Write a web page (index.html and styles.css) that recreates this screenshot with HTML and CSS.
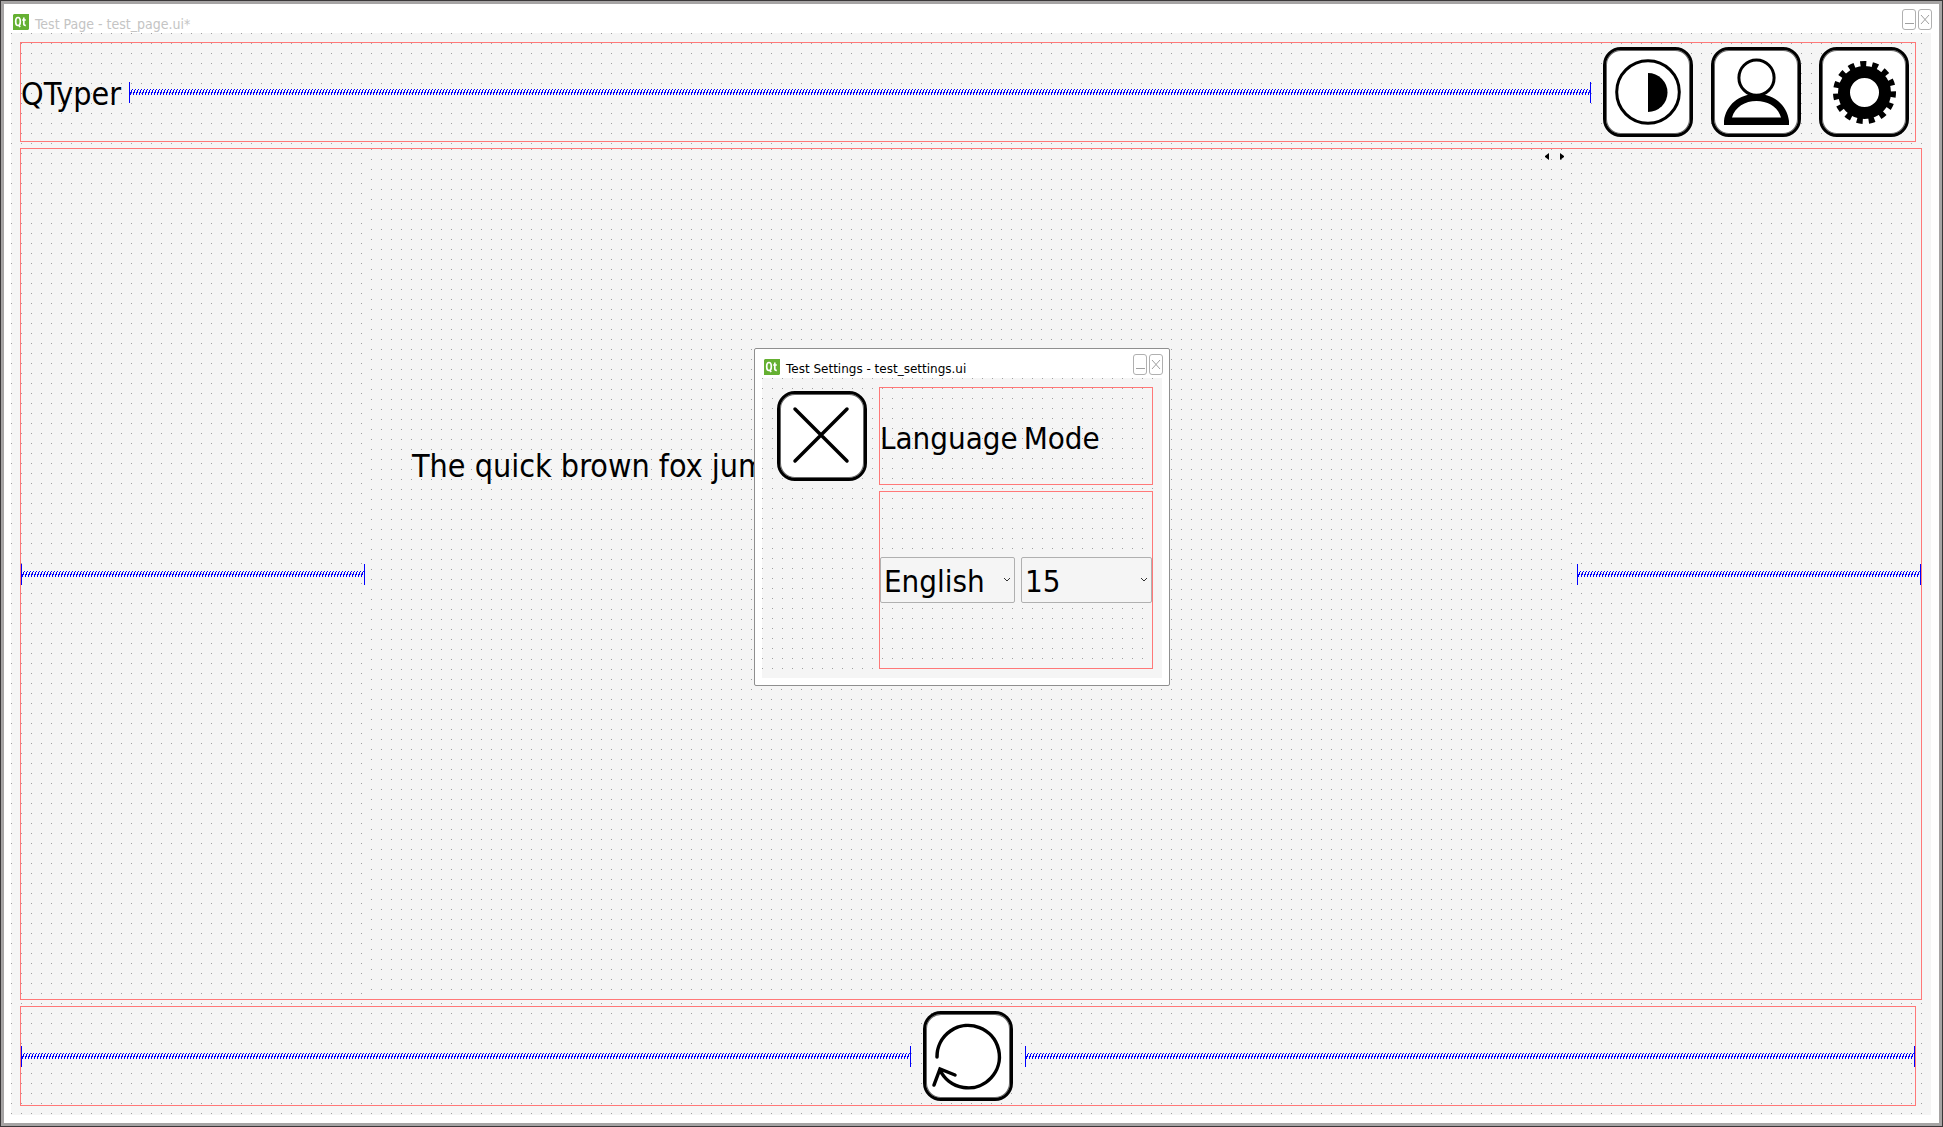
FILE: index.html
```html
<!DOCTYPE html>
<html lang="en">
<head>
<meta charset="utf-8">
<title>Test Page</title>
<link rel="stylesheet" href="styles.css">
</head>
<body>
<svg class="defs" width="0" height="0" aria-hidden="true">
  <defs>
    <pattern id="coil" width="3" height="6" patternUnits="userSpaceOnUse">
      <path d="M2 0h1v1h-1zM1 1h1v3h-1zM0 3h1v3h-1z" fill="#00f" shape-rendering="crispEdges"/>
    </pattern>
    <symbol id="qt" viewBox="0 0 16 16">
      <path d="M1 0h15v15l-1 1H0V1z" fill="#65b032"/>
      <path d="M5 3.500c-1.800 0-2.300 1.500-2.300 4s.500 4 2.300 4 2.300-1.500 2.300-4-.500-4-2.300-4zM5.500 11l1.700 2M10.800 3.500v6.500q0 1.500 2 1.300M9.200 6h3.600" fill="none" stroke="#fff" stroke-width="1.700"/>
    </symbol>
  </defs>
</svg>
<main class="window page-window">
  <header class="titlebar muted">
    <svg class="logo" aria-hidden="true"><use href="#qt"/></svg>
    <h1 class="title">Test Page - test_page.ui*</h1>
    <button class="winbtn" aria-label="Minimize"><svg viewBox="0 0 12 19"><path d="M2 13.500h9"/></svg></button>
    <button class="winbtn" aria-label="Close"><svg viewBox="0 0 12 19"><path d="M2 5l8 9M10 5l-8 9"/></svg></button>
  </header>
  <div class="canvas grid">
    <section class="layout bar header">
      <span class="label">QTyper</span>
      <div class="spring"></div>
      <div class="tools">
        <button class="tool" aria-label="Contrast"><svg viewBox="0 0 90 90"><circle cx="45" cy="45" r="31.300" fill="none" stroke="#000" stroke-width="3"/><path d="M45 26a19.500 19.500 0 0 1 0 39z"/></svg></button>
        <button class="tool" aria-label="Profile"><svg viewBox="0 0 90 90"><circle cx="45.500" cy="30.700" r="17.600" fill="none" stroke="#000" stroke-width="3"/><path fill-rule="evenodd" d="M13 78V74C15 58 28 47 45.500 47S76 58 78 74V78zM21 70.500H70C67 60 57 54 45.500 54S24 60 21 70.500z"/></svg></button>
        <button class="tool" aria-label="Settings"><svg viewBox="0 0 90 90"><circle cx="45.500" cy="45.500" r="20.500" fill="none" stroke="#000" stroke-width="12"/><circle cx="45.500" cy="45.500" r="28.500" fill="none" stroke="#000" stroke-width="6" pathLength="150" stroke-dasharray="5 5" stroke-dashoffset="1"/></svg></button>
      </div>
    </section>
    <section class="layout middle">
      <div class="spring"></div>
      <div class="text-area grid"><span class="sample">The quick brown fox jumps</span>
        <svg class="arrows" viewBox="0 0 19 8" aria-hidden="true"><path d="M4 0v7L0 4V3zM15 0v7l4-3V3z"/></svg>
      </div>
      <div class="spring"></div>
    </section>
    <section class="layout bar footer">
      <div class="spring"></div>
      <button class="tool" aria-label="Restart"><svg viewBox="0 0 90 90" fill="none" stroke="#000" stroke-width="3.500" stroke-linecap="round"><path d="M14 46A31.200 31.200 0 1 1 17 59M11 74L17 58L32 64"/></svg></button>
      <div class="spring"></div>
    </section>
  </div>
  <section class="window dialog" aria-label="Test Settings">
    <header class="titlebar">
      <svg class="logo" aria-hidden="true"><use href="#qt"/></svg>
      <h2 class="title">Test Settings - test_settings.ui</h2>
      <button class="winbtn" aria-label="Minimize"><svg viewBox="0 0 12 19"><path d="M2 13.500h9"/></svg></button>
      <button class="winbtn" aria-label="Close"><svg viewBox="0 0 12 19"><path d="M2 5l8 9M10 5l-8 9"/></svg></button>
    </header>
    <div class="settings grid">
      <button class="tool" aria-label="Close settings"><svg viewBox="0 0 90 90" fill="none" stroke="#000" stroke-width="3.500" stroke-linecap="round"><path d="M18 18L70 70M70 18L18 70"/></svg></button>
      <div class="fields">
        <div class="layout labels"><label class="label" for="language">Language</label><label class="label" for="mode">Mode</label></div>
        <div class="layout choices">
          <div class="combo wide"><select id="language"><option>English</option></select><svg viewBox="0 0 8 5" aria-hidden="true"><path d="M1 1l3 3 3-3"/></svg></div>
          <div class="combo"><select id="mode"><option>15</option></select><svg viewBox="0 0 8 5" aria-hidden="true"><path d="M1 1l3 3 3-3"/></svg></div>
        </div>
      </div>
    </div>
  </section>
</main>
<script src="springs.js"></script>
</body>
</html>
```
FILE: springs.js
```js
// Each spring is drawn as a coil between two end bars.
document.querySelectorAll('.spring').forEach(function (spring) {
  spring.innerHTML = '<svg class="coil" aria-hidden="true"><rect width="100%" height="6" fill="url(#coil)"/></svg>';
});
```
FILE: styles.css
```css
* { box-sizing: border-box; }
body {
  margin: 0;
  color: #000;
  font-family: "DejaVu Sans Condensed", "DejaVu Sans", sans-serif;
  font-stretch: condensed;
}
button { padding: 0; font: inherit; }
svg { display: block; }
.defs { position: absolute; }
.window { background: #fff; display: flex; flex-direction: column; }
.page-window {
  position: relative;
  min-height: 100vh;
  border: 1px solid #3a3839;
  padding: 3px 11px 11px 10px;
  box-shadow: inset 0 0 0 3px #a6a4a4;
}
.titlebar { display: flex; align-items: flex-start; gap: 2px; height: 29px; margin-right: -1px; padding: 5px 0 0 2px; }
.logo { width: 16px; height: 16px; margin-top: 5px; }
.title {
  flex: 1;
  margin: 5px 0 0 4px;
  font-family: "DejaVu Sans", sans-serif;
  font-size: 12px;
  font-stretch: normal;
  font-weight: 400;
  line-height: 20px;
}
.muted .title { color: #c4c4c4; font-family: "DejaVu Sans Condensed", "DejaVu Sans", sans-serif; font-size: 14px; font-stretch: condensed; }
.winbtn { width: 14px; height: 21px; border: 1px solid #b0b0b0; border-radius: 3px; background: #fff; }
.winbtn svg { width: 12px; height: 19px; fill: none; stroke: #a0a0a0; }
.canvas { flex: 1; display: flex; flex-direction: column; gap: 6px; padding: 9px; }
.grid {
  background-color: #f5f5f5;
  background-image: conic-gradient(from 270deg at 1px 1px, #a0a0a0 90deg, transparent 0);
  background-size: 10px 10px;
}
.layout { border: 1px solid #ff7878; display: flex; align-items: center; }
.bar { height: 100px; margin-right: 6px; }
.header { gap: 8px; }
.footer { gap: 12px; }
.label, .sample { font-size: 32px; line-height: 38px; white-space: nowrap; }
.label { padding-top: 3px; }
.spring {
  flex: 1;
  height: 21px;
  padding-top: 7px;
  border: solid #00f;
  border-width: 0 1px;
}
.coil { width: 100%; height: 6px; }
.tools { display: flex; gap: 18px; padding: 0 6px 0 4px; }
.tool {
  flex: none;
  width: 90px;
  height: 90px;
  border: 3px solid #000;
  border-radius: 18px;
  background: #fff;
  box-shadow: inset 0 0 0 1px #666;
}
.tool svg { width: 90px; height: 90px; margin: -3px; }
.middle { flex: 1; gap: 6px; }
.text-area { flex: 0 0 1200px; align-self: stretch; position: relative; display: flex; padding: 298px 41px 0; overflow: hidden; }
.arrows { position: absolute; top: 4px; right: 7px; width: 19px; height: 8px; }
.dialog {
  position: absolute;
  left: 753px;
  top: 347px;
  width: 416px;
  border: 1px solid #8f8f8f;
  border-radius: 2px;
  padding: 0 7px 7px;
}
.settings { display: flex; gap: 12px; height: 300px; padding: 9px 9px 9px 15px; }
.settings > .tool { margin-top: 4px; }
.fields { flex: 1; display: grid; grid-template-rows: 98px 178px; gap: 6px; }
.labels, .choices { gap: 6px; }
.labels .label { font-size: 31px; }
.combo { flex: 1; position: relative; height: 46px; }
.wide { flex: 0 0 135px; }
.combo select {
  width: 100%;
  height: 46px;
  appearance: none;
  border: 1px solid #b0b0b0;
  border-radius: 2px;
  background: #f5f5f5;
  padding: 2px 3px 0;
  color: #000;
  font: inherit;
  font-size: 31px;
}
.combo svg { position: absolute; right: 4px; top: 20px; width: 8px; height: 5px; fill: none; stroke: #333; pointer-events: none; }
```
